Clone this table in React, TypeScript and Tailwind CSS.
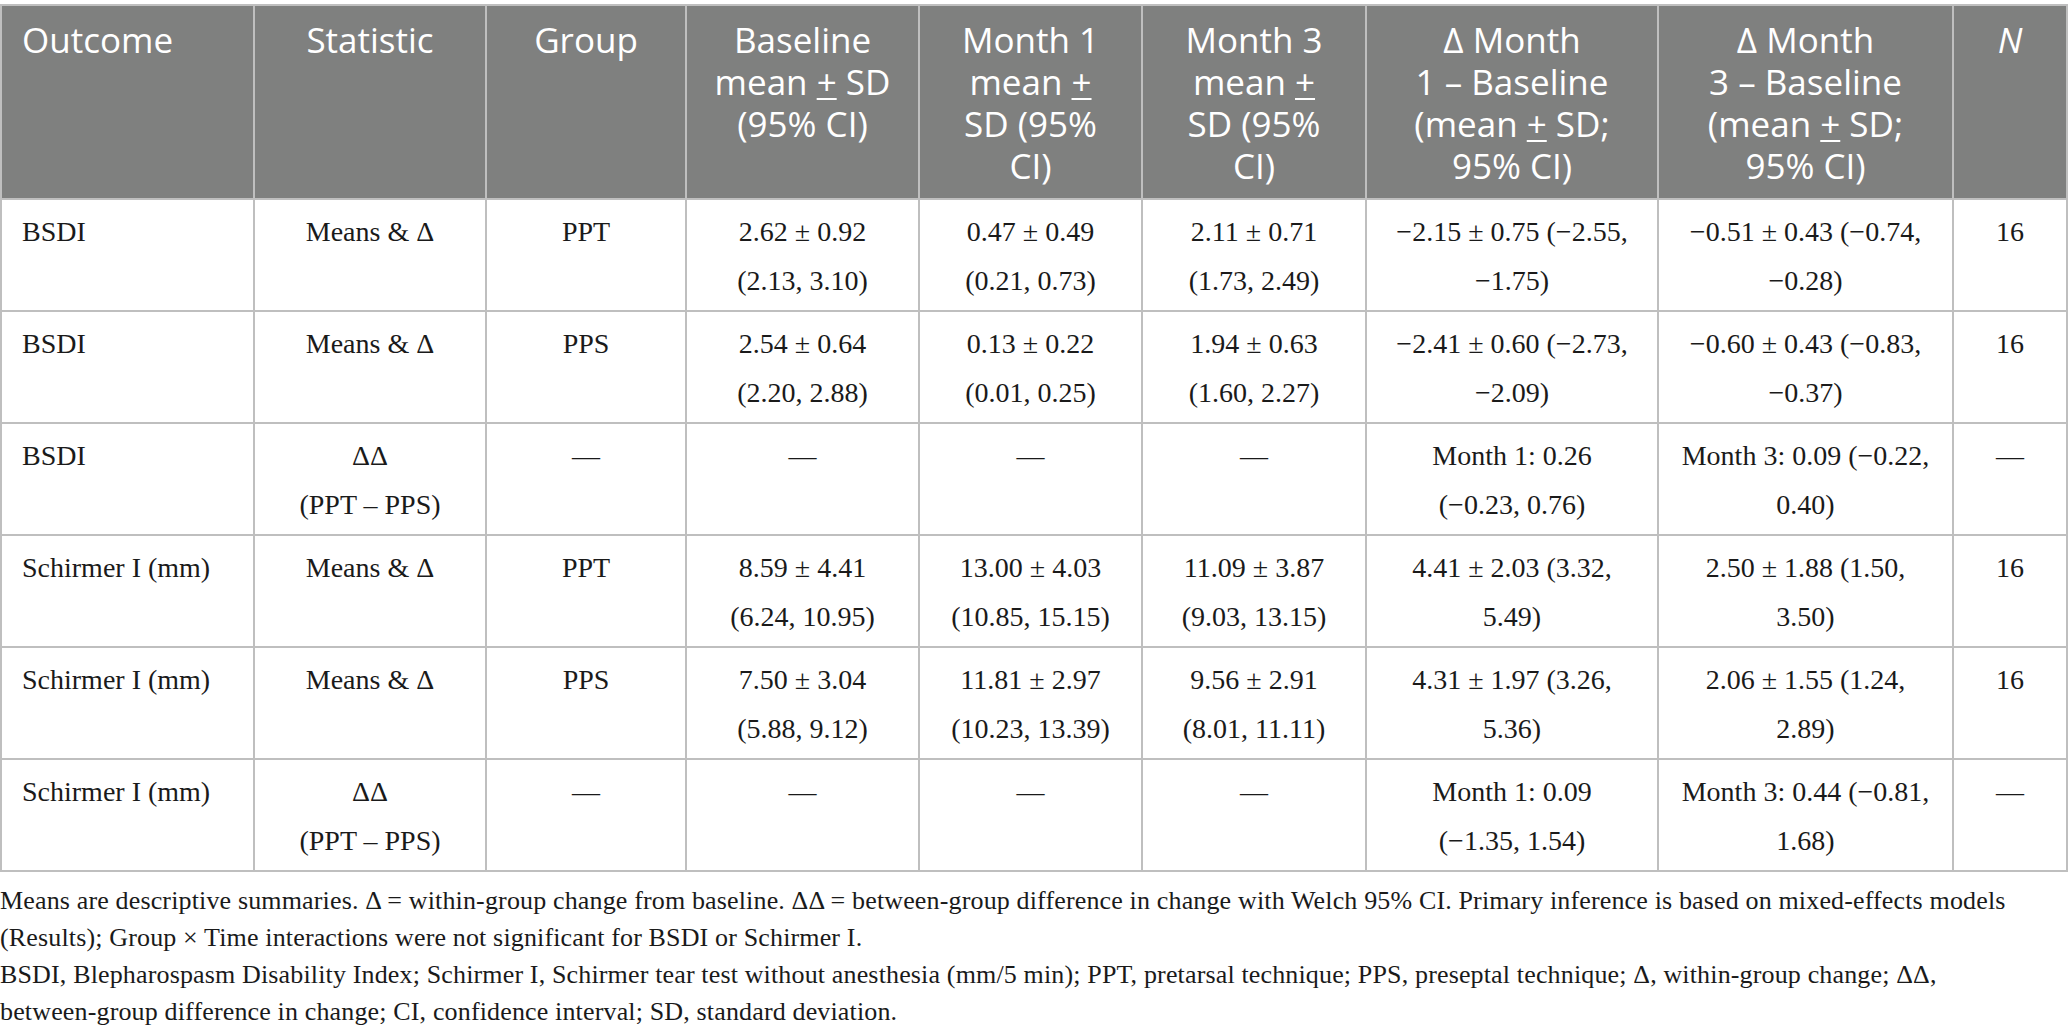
import React from 'react'

type Row = {
    outcome: string
    stat: string[]
    group: string
    base: string[]
    m1: string[]
    m3: string[]
    d1: string[]
    d3: string[]
    n: string
}

const rows: Row[] = [
    { outcome: 'BSDI', stat: ['Means & Δ'], group: 'PPT', base: ['2.62 ± 0.92', '(2.13, 3.10)'], m1: ['0.47 ± 0.49', '(0.21, 0.73)'], m3: ['2.11 ± 0.71', '(1.73, 2.49)'], d1: ['−2.15 ± 0.75 (−2.55,', '−1.75)'], d3: ['−0.51 ± 0.43 (−0.74,', '−0.28)'], n: '16' },
    { outcome: 'BSDI', stat: ['Means & Δ'], group: 'PPS', base: ['2.54 ± 0.64', '(2.20, 2.88)'], m1: ['0.13 ± 0.22', '(0.01, 0.25)'], m3: ['1.94 ± 0.63', '(1.60, 2.27)'], d1: ['−2.41 ± 0.60 (−2.73,', '−2.09)'], d3: ['−0.60 ± 0.43 (−0.83,', '−0.37)'], n: '16' },
    { outcome: 'BSDI', stat: ['ΔΔ', '(PPT – PPS)'], group: '—', base: ['—'], m1: ['—'], m3: ['—'], d1: ['Month 1: 0.26', '(−0.23, 0.76)'], d3: ['Month 3: 0.09 (−0.22,', '0.40)'], n: '—' },
    { outcome: 'Schirmer I (mm)', stat: ['Means & Δ'], group: 'PPT', base: ['8.59 ± 4.41', '(6.24, 10.95)'], m1: ['13.00 ± 4.03', '(10.85, 15.15)'], m3: ['11.09 ± 3.87', '(9.03, 13.15)'], d1: ['4.41 ± 2.03 (3.32,', '5.49)'], d3: ['2.50 ± 1.88 (1.50,', '3.50)'], n: '16' },
    { outcome: 'Schirmer I (mm)', stat: ['Means & Δ'], group: 'PPS', base: ['7.50 ± 3.04', '(5.88, 9.12)'], m1: ['11.81 ± 2.97', '(10.23, 13.39)'], m3: ['9.56 ± 2.91', '(8.01, 11.11)'], d1: ['4.31 ± 1.97 (3.26,', '5.36)'], d3: ['2.06 ± 1.55 (1.24,', '2.89)'], n: '16' },
    { outcome: 'Schirmer I (mm)', stat: ['ΔΔ', '(PPT – PPS)'], group: '—', base: ['—'], m1: ['—'], m3: ['—'], d1: ['Month 1: 0.09', '(−1.35, 1.54)'], d3: ['Month 3: 0.44 (−0.81,', '1.68)'], n: '—' },
]

const PM = () => <span className="underline underline-offset-[3px] decoration-2">+</span>

const Lines = ({ lines }: { lines: string[] }) => (
    <>
        {lines.map((l, i) => (
            <div key={i} className="whitespace-nowrap">{l}</div>
        ))}
    </>
)

const th = 'border-2 border-[#bfbfbf] align-top pt-[13px] px-2 text-center font-normal'
const td = 'border-2 border-[#bfbfbf] align-top pt-[7px] px-2 text-center'

export default function App() {
    return (
        <div className="w-[2068px] bg-white pt-[4px] text-[#1a1a1a]" style={{ fontFamily: '"Liberation Serif", serif' }}>
            <table className="w-[2066px] table-fixed border-collapse">
                <colgroup>
                    <col className="w-[253px]" />
                    <col className="w-[232px]" />
                    <col className="w-[200px]" />
                    <col className="w-[233px]" />
                    <col className="w-[223px]" />
                    <col className="w-[224px]" />
                    <col className="w-[292px]" />
                    <col className="w-[295px]" />
                    <col className="w-[114px]" />
                </colgroup>
                <thead>
                    <tr className="h-[194px] bg-[#7f807f] text-white text-[35px] leading-[42px] font-['Open_Sans',sans-serif]">
                        <th className={th + ' text-left pl-[20px]'}>Outcome</th>
                        <th className={th}>Statistic</th>
                        <th className={th}>Group</th>
                        <th className={th}>Baseline<br />mean <PM /> SD<br />(95% CI)</th>
                        <th className={th}>Month 1<br />mean <PM /><br />SD (95%<br />CI)</th>
                        <th className={th}>Month 3<br />mean <PM /><br />SD (95%<br />CI)</th>
                        <th className={th}>Δ Month<br />1 – Baseline<br />(mean <PM /> SD;<br />95% CI)</th>
                        <th className={th}>Δ Month<br />3 – Baseline<br />(mean <PM /> SD;<br />95% CI)</th>
                        <th className={th}><i>N</i></th>
                    </tr>
                </thead>
                <tbody className="text-[28px] leading-[49px]">
                    {rows.map((r, i) => (
                        <tr key={i} className="h-[112px]">
                            <td className={td + ' text-left pl-[20px]'}>{r.outcome}</td>
                            <td className={td}><Lines lines={r.stat} /></td>
                            <td className={td}>{r.group}</td>
                            <td className={td}><Lines lines={r.base} /></td>
                            <td className={td}><Lines lines={r.m1} /></td>
                            <td className={td}><Lines lines={r.m3} /></td>
                            <td className={td}><Lines lines={r.d1} /></td>
                            <td className={td}><Lines lines={r.d3} /></td>
                            <td className={td}>{r.n}</td>
                        </tr>
                    ))}
                </tbody>
            </table>
            <div className="mt-[10px] text-[26px] leading-[37px] tracking-[0.15px]">
                <p className="whitespace-nowrap">Means are descriptive summaries. Δ = within-group change from baseline. ΔΔ = between-group difference in change with Welch 95% CI. Primary inference is based on mixed-effects models</p>
                <p className="whitespace-nowrap">(Results); Group × Time interactions were not significant for BSDI or Schirmer I.</p>
                <p className="whitespace-nowrap">BSDI, Blepharospasm Disability Index; Schirmer I, Schirmer tear test without anesthesia (mm/5 min); PPT, pretarsal technique; PPS, preseptal technique; Δ, within-group change; ΔΔ,</p>
                <p className="whitespace-nowrap">between-group difference in change; CI, confidence interval; SD, standard deviation.</p>
            </div>
        </div>
    )
}
